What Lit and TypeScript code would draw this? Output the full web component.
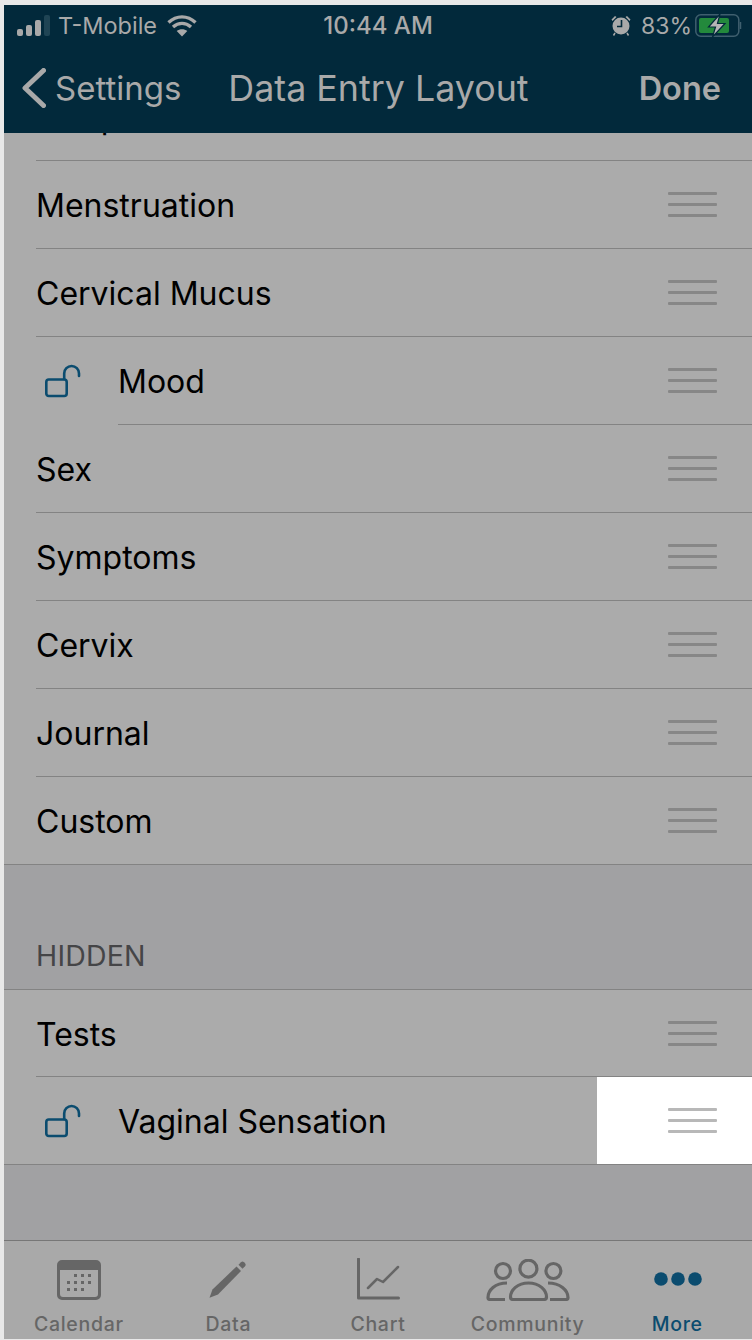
import { LitElement, html, css, svg } from 'lit';
import { customElement } from 'lit/decorators.js';

interface Row {
  label: string;
  locked?: boolean;
}

const VISIBLE_ROWS: Row[] = [
  { label: 'Temp' },
  { label: 'Menstruation' },
  { label: 'Cervical Mucus' },
  { label: 'Mood', locked: true },
  { label: 'Sex' },
  { label: 'Symptoms' },
  { label: 'Cervix' },
  { label: 'Journal' },
  { label: 'Custom' },
];

const HIDDEN_ROWS: Row[] = [{ label: 'Tests' }, { label: 'Vaginal Sensation', locked: true }];

const LOCK_ICON = svg`<svg class="lock" width="36" height="36" viewBox="0 0 36 36" fill="none" stroke="#0b4c6f" stroke-width="2.6" stroke-linecap="round">
  <rect x="1.3" y="16.5" width="20.4" height="16.5" rx="2.5" />
  <path d="M19.2 16V10.400a7.400 7.400 0 0 1 14.800 0v2.600" />
</svg>`;

const TABS = [
  {
    label: 'Calendar',
    icon: svg`<svg width="44" height="40" viewBox="0 0 44 40" fill="#666">
      <path fill-rule="evenodd" d="M5 0h34a5 5 0 0 1 5 5v30a5 5 0 0 1-5 5H5a5 5 0 0 1-5-5V5a5 5 0 0 1 5-5zM3 10v24a3 3 0 0 0 3 3h32a3 3 0 0 0 3-3V10z" />
      <g>
        <rect x="17" y="14" width="3" height="3" /><rect x="24" y="14" width="3" height="3" /><rect x="31" y="14" width="3" height="3" />
        <rect x="10" y="21" width="3" height="3" /><rect x="17" y="21" width="3" height="3" /><rect x="24" y="21" width="3" height="3" /><rect x="31" y="21" width="3" height="3" />
        <rect x="10" y="28" width="3" height="3" /><rect x="17" y="28" width="3" height="3" /><rect x="24" y="28" width="3" height="3" />
      </g>
    </svg>`,
  },
  {
    label: 'Data',
    icon: svg`<svg width="38" height="38" viewBox="0 0 38 38" fill="#666">
      <path d="M0.500 36.800 3.500 28.500 27.500 5.500 32 10 9 33.500z" />
      <path d="M29.500 3.800 32 1.300a2.200 2.200 0 0 1 3 0l1 1a2.200 2.200 0 0 1 0 3l-2.500 2.500z" />
    </svg>`,
  },
  {
    label: 'Chart',
    icon: svg`<svg class="nudge" width="43" height="43" viewBox="0 0 43 43" fill="none" stroke="#666" stroke-linecap="round" stroke-linejoin="round">
      <path d="M1.500 1v39h40" stroke-width="3" />
      <path d="M11 30l9-9 6 3 15-15" stroke-width="2.500" />
    </svg>`,
  },
  {
    label: 'Community',
    icon: svg`<svg width="84" height="42" viewBox="0 0 84 42" fill="none" stroke="#666" stroke-width="3.200" stroke-linejoin="round">
      <circle cx="17" cy="12" r="7.500" />
      <circle cx="42.400" cy="9.700" r="8.500" />
      <circle cx="67.400" cy="12" r="7.500" />
      <path d="M42.500 24c-11 0-18 7-18 14 0 1.500 1 2.500 2.500 2.500h31c1.500 0 2.500-1 2.500-2.500 0-7-7-14-18-14z" />
      <path d="M21 24C9 24 2 31 2 38.500c0 1 .8 2 2 2h15" />
      <path d="M62 24c12 0 20 7 20 14.500 0 1-.8 2-2 2H64" />
    </svg>`,
  },
  {
    label: 'More',
    active: true,
    icon: svg`<svg class="nudge" width="48" height="14" viewBox="0 0 48 14" fill="#0b4c6f">
      <circle cx="7" cy="7" r="6.800" /><circle cx="24" cy="7" r="6.800" /><circle cx="41" cy="7" r="6.800" />
    </svg>`,
  },
];

@customElement('app-root')
export class AppRoot extends LitElement {
  static styles = css`
    :host {
      display: flex;
      flex-direction: column;
      box-sizing: border-box;
      height: 1340px;
      padding: 5px 0 1px 4px;
      background: #e8e8e8;
      font-family: Inter, 'Liberation Sans', sans-serif;
      color: #000;
    }

    .header {
      flex: none;
      height: 128px;
      background: #02293b;
      color: #a9a9a9;
    }

    .status {
      display: flex;
      align-items: center;
      height: 41px;
      font-size: 23.500px;
      padding: 0 10px 0 13px;
    }

    .status-left,
    .status-right {
      flex: 1;
      display: flex;
      align-items: center;
    }

    .status-right {
      justify-content: flex-end;
    }

    .carrier {
      margin: 0 10px 0 7px;
    }

    .time {
      font-weight: 500;
      font-size: 24px;
      margin-left: -3px;
    }

    .percent {
      margin: 0 3px 0 10px;
      font-size: 23px;
    }

    .nav {
      display: flex;
      align-items: center;
      height: 84px;
      padding: 0 31px 0 18px;
      font-size: 33px;
    }

    .back {
      margin-right: 9px;
    }

    .title {
      margin-left: 47px;
      flex: 1;
      font-size: 35.800px;
    }

    .done {
      font-weight: 600;
      font-size: 32.500px;
    }

    .list {
      flex: 1;
      min-height: 0;
      overflow: hidden;
      background: #a1a1a3;
    }

    .rows {
      margin-top: -60px;
    }

    .row {
      display: flex;
      align-items: center;
      box-sizing: border-box;
      height: 88px;
      background: #ababab;
    }

    .row.short {
      height: 87px;
    }

    .row-body {
      flex: 1;
      min-width: 0;
      align-self: stretch;
      display: flex;
      align-items: center;
      margin-left: 32px;
      border-bottom: 1px solid #838383;
      font-size: 32px;
    }

    .row.locked .row-body {
      margin-left: 0;
    }

    .row.last {
      border-bottom: 1px solid #838383;
    }

    .row.last .row-body {
      border-bottom: none;
    }

    .lock-cell {
      flex: none;
      display: flex;
      width: 114px;
      padding-left: 41px;
      box-sizing: border-box;
    }

    .row-label {
      flex: 1;
      padding-top: 2px;
    }

    .handle {
      flex: none;
      align-self: stretch;
      display: flex;
      flex-direction: column;
      justify-content: center;
      gap: 8px;
      width: 155px;
      padding: 0 35px 0 71px;
      box-sizing: border-box;
    }

    .handle span {
      height: 3px;
      border-radius: 1px;
      background: #878787;
    }

    .handle.lifted {
      background: #fff;
    }

    .handle.lifted span {
      background: #b8b8b8;
    }

    .section-head {
      box-sizing: border-box;
      height: 125px;
      padding: 74px 0 0 32px;
      font-size: 28.500px;
      letter-spacing: 0.2px;
      line-height: 34px;
      color: #454547;
      border-bottom: 1px solid #838383;
    }

    .tabs {
      flex: none;
      display: flex;
      height: 99px;
      box-sizing: border-box;
      background: #a9a9a9;
      border-top: 1px solid #777;
    }

    .tab {
      flex: 1;
      display: flex;
      flex-direction: column;
      align-items: center;
      color: #666;
      font-size: 19.500px;
      letter-spacing: 0.7px;
      font-weight: 500;
    }

    .tab.active {
      color: #0b4c6f;
    }

    .tab-icon {
      height: 71px;
      display: flex;
      align-items: center;
      padding-top: 7px;
      box-sizing: border-box;
    }

    svg {
      display: block;
    }

    .nudge {
      margin: -2px 0 0 2px;
    }
  `;

  private renderRow(row: Row, opts: { last?: boolean; lifted?: boolean; short?: boolean } = {}) {
    const cls = `row${row.locked ? ' locked' : ''}${opts.last ? ' last' : ''}${opts.short ? ' short' : ''}`;
    return html`
      <div class=${cls}>
        ${row.locked ? html`<div class="lock-cell">${LOCK_ICON}</div>` : ''}
        <div class="row-body">
          <div class="row-label">${row.label}</div>
          <div class="handle ${opts.lifted ? 'lifted' : ''}"><span></span><span></span><span></span></div>
        </div>
      </div>
    `;
  }

  render() {
    return html`
      <div class="header">
        <div class="status">
          <div class="status-left">
            <svg width="34" height="22" viewBox="0 0 34 22" fill="#a9a9a9">
              <rect x="0" y="14" width="6" height="7" rx="2" />
              <rect x="9" y="10" width="6" height="11" rx="2" />
              <rect x="18" y="5" width="6" height="16" rx="2" />
              <rect x="27" y="0" width="6" height="21" rx="2" fill="#1f4454" />
            </svg>
            <span class="carrier">T-Mobile</span>
            <svg width="30" height="23" viewBox="0 0 30 23" fill="none" stroke="#a9a9a9" stroke-width="3.400">
              <path d="M1.500 8.500c8-7.500 19-7.500 27 0" />
              <path d="M6 13c5.500-4.800 12.500-4.800 18 0" />
              <path d="M15 22.500l-5.300-5.500c3-2.400 7.600-2.400 10.600 0z" fill="#a9a9a9" stroke="none" />
            </svg>
          </div>
          <span class="time">10:44 AM</span>
          <div class="status-right">
            <svg width="20" height="21" viewBox="0 0 20 21" fill="#a9a9a9">
              <circle cx="10" cy="11" r="8.500" />
              <path d="M0.500 4.500 4 1l1.500 1L1.500 6zM19.500 4.500 16 1l-1.500 1 4 4z" />
              <path d="M10.500 5v6.500H6" fill="none" stroke="#02293b" stroke-width="1.600" />
              <path d="M4 18l-1.500 2.500M16 18l1.500 2.500" stroke="#a9a9a9" stroke-width="1.500" />
            </svg>
            <span class="percent">83%</span>
            <svg width="47" height="23" viewBox="0 0 47 23" fill="none">
              <rect x="0.800" y="0.800" width="43" height="21.400" rx="5" stroke="#3f5f6e" stroke-width="1.500" />
              <path d="M45.500 8v7" stroke="#3f5f6e" stroke-width="1.500" />
              <rect x="4" y="4" width="30" height="15" rx="2" fill="#23893c" />
              <path d="M25 0 13.500 13h7l-3 10L30 9.500h-7.500z" fill="#b5b5b5" stroke="#02293b" stroke-width="1.200" />
            </svg>
          </div>
        </div>
        <div class="nav">
          <svg class="back" width="24" height="40" viewBox="0 0 24 40" fill="none" stroke="#a9a9a9" stroke-width="5" stroke-linecap="round" stroke-linejoin="round">
            <path d="M21.500 2.500 3 20l18.500 17.500" />
          </svg>
          <span>Settings</span>
          <span class="title">Data Entry Layout</span>
          <span class="done">Done</span>
        </div>
      </div>
      <div class="list">
        <div class="rows">
          ${VISIBLE_ROWS.map((r, i) => this.renderRow(r, { last: i === VISIBLE_ROWS.length - 1 }))}
        </div>
        <div class="section-head">HIDDEN</div>
        ${this.renderRow(HIDDEN_ROWS[0], { short: true })}
        ${this.renderRow(HIDDEN_ROWS[1], { last: true, lifted: true })}
      </div>
      <div class="tabs">
        ${TABS.map(
          (t) => html`
            <div class="tab ${t.active ? 'active' : ''}">
              <div class="tab-icon">${t.icon}</div>
              <div>${t.label}</div>
            </div>
          `,
        )}
      </div>
    `;
  }
}

declare global {
  interface HTMLElementTagNameMap {
    'app-root': AppRoot;
  }
}
